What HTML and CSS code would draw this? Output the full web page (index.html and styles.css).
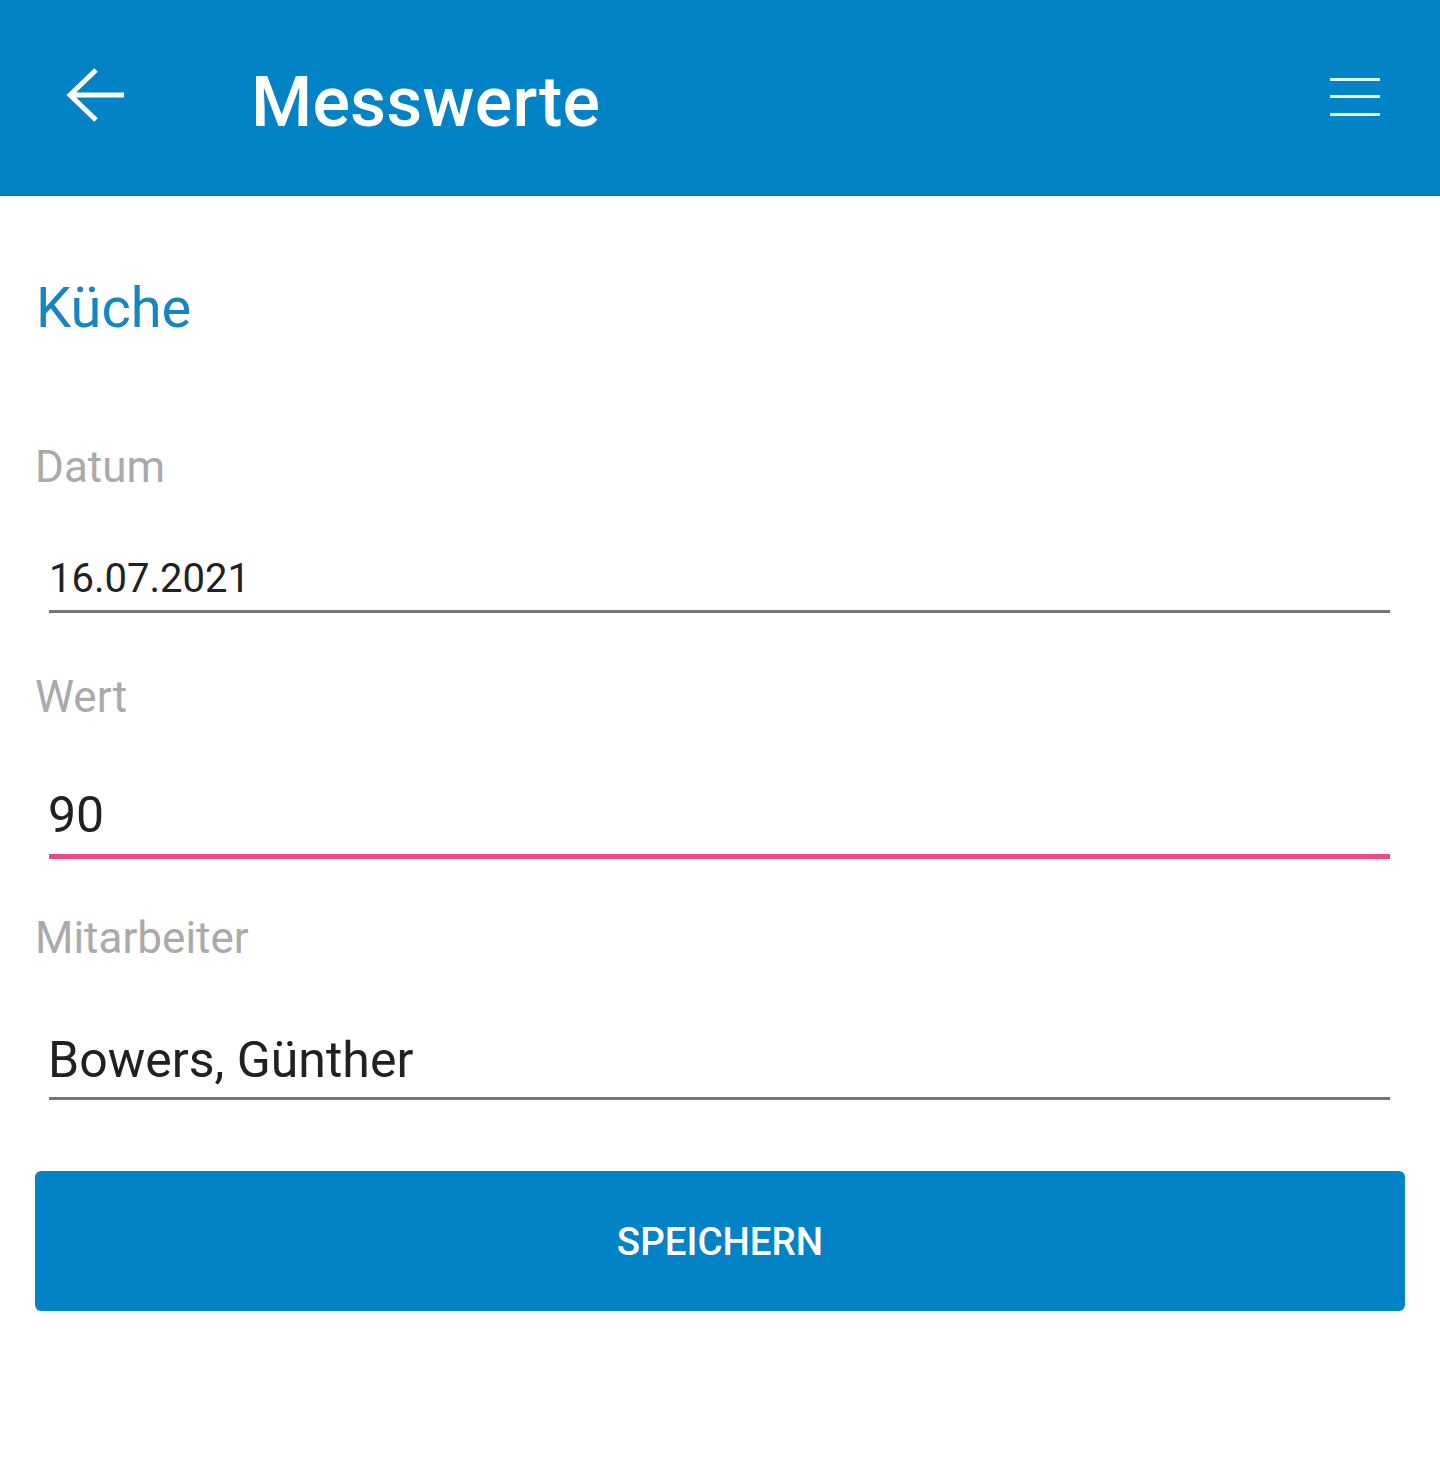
FILE: index.html
```html
<!DOCTYPE html>
<html lang="de">
<head>
    <meta charset="UTF-8">
    <meta name="viewport" content="width=device-width, initial-scale=1.0">
    <title>Messwerte</title>
    <link rel="stylesheet" href="styles.css">
</head>
<body>
    <header class="toolbar">
        <button class="toolbar-back" aria-label="Zurück">
            <svg width="60" height="60" viewBox="0 0 60 60">
                <path d="M59 28 H6 M31 3 L5 28 L31 53" fill="none" stroke="#fff" stroke-width="5" stroke-linejoin="miter"/>
            </svg>
        </button>
        <h1 class="toolbar-title">Messwerte</h1>
        <button class="toolbar-menu" aria-label="Menü">
            <svg width="50" height="42" viewBox="0 0 50 42">
                <rect x="0" y="4" width="50" height="3" fill="#e4f6ff"/>
                <rect x="0" y="21" width="50" height="3" fill="#e4f6ff"/>
                <rect x="0" y="39" width="50" height="3" fill="#e4f6ff"/>
            </svg>
        </button>
    </header>

    <main class="form">
        <h2 class="room">Küche</h2>

        <label class="field-label">Datum</label>
        <div class="field field-date">16.07.2021</div>

        <label class="field-label field-label-wert">Wert</label>
        <div class="field field-big field-focused">90</div>

        <label class="field-label field-label-ma">Mitarbeiter</label>
        <div class="field field-big field-ma">Bowers, Günther</div>

        <button class="save-button">SPEICHERN</button>
    </main>
</body>
</html>
```

FILE: styles.css
```css
body {
    margin: 0;
    background-color: #fff;
    font-family: Roboto, "Noto Sans", sans-serif;
}

/* Kopfzeile */
.toolbar {
    height: 195px;
    background-color: #0283c5;
    border-bottom: 1px solid #0a74a8;
    display: flex;
    align-items: center;
    padding: 0 60px 0 65px;
}

.toolbar button {
    background: none;
    border: none;
    padding: 0;
    cursor: pointer;
    display: flex;
}

.toolbar-back {
    margin-top: -2px;
}

.toolbar-title {
    flex-grow: 1;
    margin: 8px 0 0 126px;
    color: #fff;
    font-size: 70px;
    font-weight: 500;
    line-height: 1;
    letter-spacing: 0.2px;
}

.toolbar-menu {
    margin-top: -5px;
}

/* Formular */
.form {
    display: flex;
    flex-direction: column;
    padding: 0 35px;
}

.room {
    margin: 84px 0 0 1px;
    color: #1685c2;
    font-size: 56px;
    font-weight: 400;
    line-height: 1;
}

.field-label {
    margin: 109px 0 0 0;
    color: #aaaaaa;
    font-size: 44px;
    line-height: 1;
}

.field-label-wert {
    margin-top: 62px;
}

.field-label-ma {
    margin-top: 57px;
}

.field {
    margin: 70px 15px 0 14px;
    padding: 0 0 11px 0;
    border-bottom: 3px solid #777;
    color: #212121;
    font-size: 40px;
    line-height: 1;
}

.field-big {
    margin-top: 71px;
    font-size: 50px;
    padding-bottom: 14px;
    text-indent: -1px;
}

.field-focused {
    border-bottom: 5px solid #ea4a86;
}

.field-ma {
    margin-top: 75px;
    padding-bottom: 12px;
}

.save-button {
    margin-top: 71px;
    height: 140px;
    background-color: #0283c5;
    color: #fff;
    border: none;
    border-radius: 6px;
    font-family: Roboto, "Noto Sans", sans-serif;
    font-size: 38.5px;
    font-weight: 500;
    cursor: pointer;
}
```
